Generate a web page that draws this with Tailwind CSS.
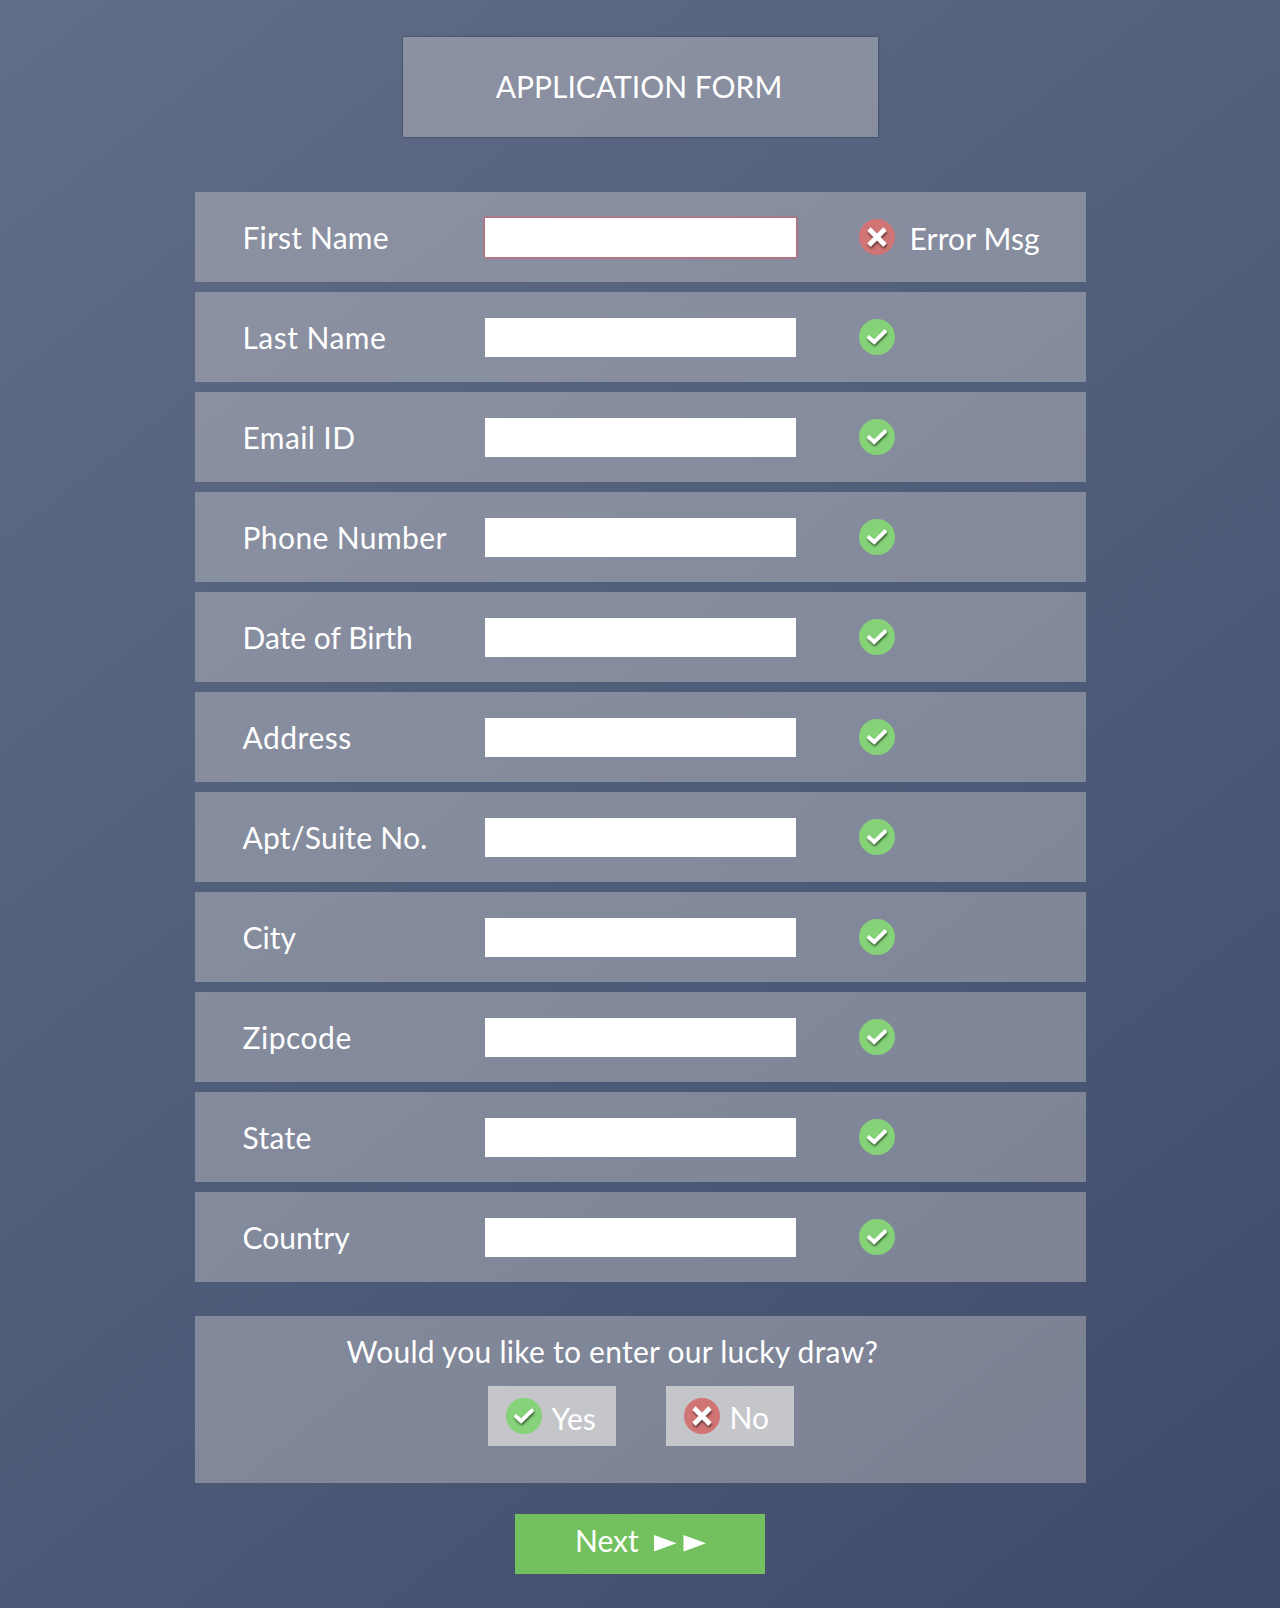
<!DOCTYPE html>
<html lang="en">
<head>
<meta charset="utf-8">
<title>Application Form</title>
<script src="https://cdn.jsdelivr.net/npm/@tailwindcss/browser@4"></script>
</head>
<body class="h-[1608px] overflow-hidden bg-linear-[142deg] from-[#626d87] via-[#4c5a77] via-[60%] to-[#3f4a69] font-[Lato,sans-serif] text-[30px] leading-[36px] text-white whitespace-nowrap">
<svg class="absolute size-0">
  <defs>
    <filter id="shadow" x="-40%" y="-40%" width="190%" height="190%"><feDropShadow dx="0.6" dy="2" stdDeviation="1.3" flood-color="#000" flood-opacity="0.6"/></filter>
  </defs>
  <symbol id="ok" viewBox="0 0 36 36"><circle cx="18" cy="18" r="18" fill="#85d278"/><path d="M10 18.3L15.2 23L25.8 12.6" fill="none" stroke="#fff" stroke-width="3.8" stroke-linecap="round" filter="url(#shadow)"/></symbol>
  <symbol id="bad" viewBox="0 0 36 36"><circle cx="18" cy="18" r="18" fill="#d17474"/><path d="M10 10L26 26M26 10L10 26" fill="none" stroke="#fff" stroke-width="4.6" filter="url(#shadow)"/></symbol>
</svg>
<main class="flex flex-col items-center pt-[37px]">
  <h1 class="flex h-[100px] w-[475px] items-center justify-center bg-[#d3d0d0]/40 pr-[2px] pb-[2px] shadow-[0_0_2px_#2a3650]"><span>APPLICATION FORM</span></h1>
  <form class="mt-[55px] flex w-[891px] flex-col gap-[10px]">
    <div class="flex h-[90px] items-start bg-[#d3d0d0]/40 pl-[48px]"><label class="w-[242px] pt-[27px] tracking-[0.2px]">First Name</label><input class="mt-[26px] h-[39px] w-[311px] bg-white shadow-[0_0_2px_1px_#cf6070]"><svg class="mt-[27px] ml-[63px] size-[36px]"><use href="#bad"/></svg><span class="ml-[15px] pt-[28px] tracking-[0.15px]">Error Msg</span></div>
    <div class="flex h-[90px] items-start bg-[#d3d0d0]/40 pl-[48px]"><label class="w-[242px] pt-[27px] tracking-[0.45px]">Last Name</label><input class="mt-[26px] h-[39px] w-[311px] bg-white"><svg class="mt-[27px] ml-[63px] size-[36px]"><use href="#ok"/></svg></div>
    <div class="flex h-[90px] items-start bg-[#d3d0d0]/40 pl-[48px]"><label class="w-[242px] pt-[27px] tracking-[0.4px]">Email ID</label><input class="mt-[26px] h-[39px] w-[311px] bg-white"><svg class="mt-[27px] ml-[63px] size-[36px]"><use href="#ok"/></svg></div>
    <div class="flex h-[90px] items-start bg-[#d3d0d0]/40 pl-[48px]"><label class="w-[242px] pt-[27px] tracking-[0.4px]">Phone Number</label><input class="mt-[26px] h-[39px] w-[311px] bg-white"><svg class="mt-[27px] ml-[63px] size-[36px]"><use href="#ok"/></svg></div>
    <div class="flex h-[90px] items-start bg-[#d3d0d0]/40 pl-[48px]"><label class="w-[242px] pt-[27px]">Date of Birth</label><input class="mt-[26px] h-[39px] w-[311px] bg-white"><svg class="mt-[27px] ml-[63px] size-[36px]"><use href="#ok"/></svg></div>
    <div class="flex h-[90px] items-start bg-[#d3d0d0]/40 pl-[48px]"><label class="w-[242px] pt-[27px] tracking-[0.5px]">Address</label><input class="mt-[26px] h-[39px] w-[311px] bg-white"><svg class="mt-[27px] ml-[63px] size-[36px]"><use href="#ok"/></svg></div>
    <div class="flex h-[90px] items-start bg-[#d3d0d0]/40 pl-[48px]"><label class="w-[242px] pt-[27px] tracking-[0.25px]">Apt/Suite No.</label><input class="mt-[26px] h-[39px] w-[311px] bg-white"><svg class="mt-[27px] ml-[63px] size-[36px]"><use href="#ok"/></svg></div>
    <div class="flex h-[90px] items-start bg-[#d3d0d0]/40 pl-[48px]"><label class="w-[242px] pt-[27px]">City</label><input class="mt-[26px] h-[39px] w-[311px] bg-white"><svg class="mt-[27px] ml-[63px] size-[36px]"><use href="#ok"/></svg></div>
    <div class="flex h-[90px] items-start bg-[#d3d0d0]/40 pl-[48px]"><label class="w-[242px] pt-[27px] tracking-[0.5px]">Zipcode</label><input class="mt-[26px] h-[39px] w-[311px] bg-white"><svg class="mt-[27px] ml-[63px] size-[36px]"><use href="#ok"/></svg></div>
    <div class="flex h-[90px] items-start bg-[#d3d0d0]/40 pl-[48px]"><label class="w-[242px] pt-[27px] tracking-[0.3px]">State</label><input class="mt-[26px] h-[39px] w-[311px] bg-white"><svg class="mt-[27px] ml-[63px] size-[36px]"><use href="#ok"/></svg></div>
    <div class="flex h-[90px] items-start bg-[#d3d0d0]/40 pl-[48px]"><label class="w-[242px] pt-[27px]">Country</label><input class="mt-[26px] h-[39px] w-[311px] bg-white"><svg class="mt-[27px] ml-[63px] size-[36px]"><use href="#ok"/></svg></div>
  </form>
  <section class="mt-[34px] h-[167px] w-[891px] bg-[#d3d0d0]/40 pt-[17px]">
    <p class="pl-[152px] tracking-[0.26px]">Would you like to enter our lucky draw?</p>
    <div class="mt-[17px] flex gap-[50px] pl-[293px]">
      <button class="flex h-[60px] w-[128px] items-start bg-[#c5c6ca] pt-[12px] pl-[18px]"><svg class="size-[36px]"><use href="#ok"/></svg><span class="mt-[2px] ml-[10px]">Yes</span></button>
      <button class="flex h-[60px] w-[128px] items-start bg-[#c5c6ca] pt-[12px] pl-[18px]"><svg class="size-[36px]"><use href="#bad"/></svg><span class="mt-[1px] ml-[10px]">No</span></button>
    </div>
  </section>
  <button class="mt-[31px] flex h-[60px] w-[250px] items-start bg-[#73c05e] pt-[8px] pl-[60px]"><span class="w-[79px] text-left">Next</span><svg class="mt-[13px] h-[17px] w-[53px]" viewBox="0 0 53 17" fill="#fff"><path d="M0 0L22.5 8.3L0 16.6ZM29.5 0L52 8.3L29.5 16.6Z"/></svg></button>
</main>
</body>
</html>
